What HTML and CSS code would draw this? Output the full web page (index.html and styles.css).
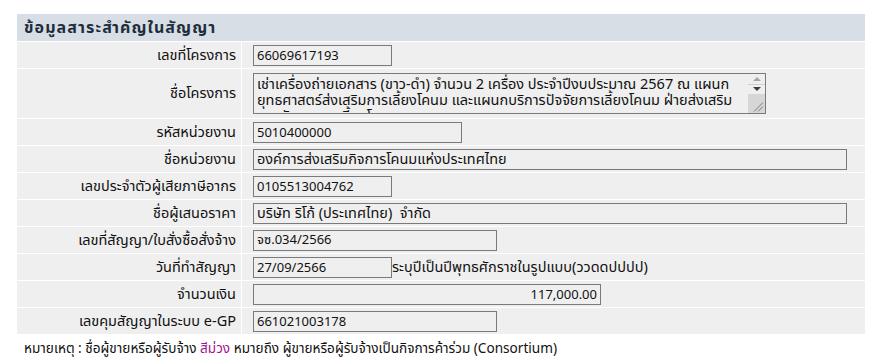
FILE: index.html
```html
<!DOCTYPE html>
<html lang="th">
<head>
<meta charset="utf-8">
<title>ข้อมูลสาระสำคัญในสัญญา</title>
<link rel="stylesheet" href="styles.css">
</head>
<body>
<div class="page">
  <div class="panel">
    <div class="panel-head">ข้อมูลสาระสำคัญในสัญญา</div>
    <div class="row">
      <div class="label">เลขที่โครงการ</div>
      <div class="value"><input class="field code w-s" value="66069617193" readonly></div>
    </div>
    <div class="row row-tall">
      <div class="label">ชื่อโครงการ</div>
      <div class="value">
        <div class="desc-box">
          <textarea class="desc" readonly>เช่าเครื่องถ่ายเอกสาร (ขาว-ดำ) จำนวน 2 เครื่อง ประจำปีงบประมาณ 2567 ณ แผนกยุทธศาสตร์ส่งเสริมการเลี้ยงโคนม และแผนกบริการปัจจัยการเลี้ยงโคนม ฝ่ายส่งเสริมและพัฒนาการเลี้ยงโคนม</textarea>
          <div class="vscroll" aria-hidden="true">
            <span class="arrow arrow-up"></span>
            <span class="arrow arrow-down"></span>
            <span class="corner">
              <svg width="17" height="19" viewBox="0 0 17 19"><path d="M6 17.5 L15 8.5 M10 17.5 L15 12.5" stroke="#7c7c7c" stroke-width="1" fill="none"/></svg>
            </span>
          </div>
        </div>
      </div>
    </div>
    <div class="row">
      <div class="label">รหัสหน่วยงาน</div>
      <div class="value"><input class="field code w-m" value="5010400000" readonly></div>
    </div>
    <div class="row">
      <div class="label">ชื่อหน่วยงาน</div>
      <div class="value"><input class="field w-xl" value="องค์การส่งเสริมกิจการโคนมแห่งประเทศไทย" readonly></div>
    </div>
    <div class="row">
      <div class="label">เลขประจำตัวผู้เสียภาษีอากร</div>
      <div class="value"><input class="field code w-s" value="0105513004762" readonly></div>
    </div>
    <div class="row">
      <div class="label">ชื่อผู้เสนอราคา</div>
      <div class="value"><input class="field w-xl" value="บริษัท ริโก้ (ประเทศไทย)  จำกัด" readonly></div>
    </div>
    <div class="row">
      <div class="label">เลขที่สัญญา/ใบสั่งซื้อสั่งจ้าง</div>
      <div class="value"><input class="field code w-ml" value="จซ.034/2566" readonly></div>
    </div>
    <div class="row">
      <div class="label">วันที่ทำสัญญา</div>
      <div class="value"><input class="field code w-s" value="27/09/2566" readonly><span class="hint">ระบุปีเป็นปีพุทธศักราชในรูปแบบ(ววดดปปปป)</span></div>
    </div>
    <div class="row">
      <div class="label">จำนวนเงิน</div>
      <div class="value"><input class="field code w-l num" value="117,000.00" readonly></div>
    </div>
    <div class="row">
      <div class="label">เลขคุมสัญญาในระบบ e-GP</div>
      <div class="value"><input class="field code w-ml" value="661021003178" readonly></div>
    </div>
  </div>
  <p class="note">หมายเหตุ : ชื่อผู้ขายหรือผู้รับจ้าง <span class="purple">สีม่วง</span> หมายถึง ผู้ขายหรือผู้รับจ้างเป็นกิจการค้าร่วม (Consortium)</p>
</div>
</body>
</html>
```

FILE: styles.css
```css
html, body {
  margin: 0;
  padding: 0;
  background: #ffffff;
}

body {
  font-family: Tahoma, "Noto Sans", "Noto Sans Thai", "DejaVu Sans", sans-serif;
  font-size: 14.5px;
  color: #111;
}

.page {
  padding: 14px 0 0 17px;
}

.panel {
  width: 848px;
  display: flex;
  flex-direction: column;
  gap: 1px;
  background: #ffffff;
}

.panel-head {
  height: 27px;
  background: #d7dee6;
  font-weight: bold;
  font-size: 16px;
  letter-spacing: 1.1px;
  color: #1f2d3b;
  display: flex;
  align-items: center;
  padding-left: 7px;
}

.row {
  display: grid;
  grid-template-columns: 224px 1fr;
  gap: 1px;
  height: 26px;
}

.row:first-of-type {
  height: 27px;
}

.row-tall {
  height: 49px;
}

.label,
.value {
  background: #efefef;
  display: flex;
  align-items: center;
}

.label {
  justify-content: flex-end;
  padding-right: 5px;
}

.value {
  padding-left: 11px;
}

.field {
  box-sizing: border-box;
  height: 21px;
  border: 1px solid #7a7a7a;
  background: #efefef;
  font: inherit;
  color: #111;
  padding: 0 3px;
  margin: 0;
  outline: none;
}

.field.code {
  font-size: 13px;
}

.w-s { width: 139px; }
.w-m { width: 209px; }
.w-ml { width: 244px; }
.w-l { width: 348px; }
.w-xl { width: 594px; }

.num { text-align: right; }

.hint {
  white-space: nowrap;
}

.desc-box {
  position: relative;
  width: 513px;
  height: 41px;
}

.desc {
  box-sizing: border-box;
  display: block;
  width: 513px;
  height: 41px;
  border: 1px solid #7a7a7a;
  background: #efefef;
  font: inherit;
  line-height: 16px;
  color: #111;
  padding: 1px 20px 0 3px;
  margin: 0;
  outline: none;
  overflow: hidden;
  resize: none;
}

.vscroll {
  position: absolute;
  top: 1px;
  right: 1px;
  bottom: 1px;
  width: 17px;
  display: flex;
  flex-direction: column;
  background: #efefef;
}

.arrow {
  position: relative;
  display: block;
  height: 10px;
}

.arrow-up {
  border-bottom: 1px solid #cfcfcf;
}

.arrow::before {
  content: "";
  position: absolute;
  left: 5px;
  width: 0;
  height: 0;
  border-left: 4px solid transparent;
  border-right: 4px solid transparent;
}

.arrow-up::before {
  top: 3px;
  border-bottom: 4px solid #a6a6a6;
}

.arrow-down::before {
  top: 2px;
  border-top: 4px solid #3c3c3c;
}

.corner {
  flex: 1;
  background: #d6d6d6;
  display: flex;
  align-items: flex-end;
}

.corner svg {
  display: block;
}

.note {
  margin: 5px 0 0 7px;
  font-size: 13.6px;
  line-height: 18px;
}

.purple {
  color: #a0158f;
}
```
